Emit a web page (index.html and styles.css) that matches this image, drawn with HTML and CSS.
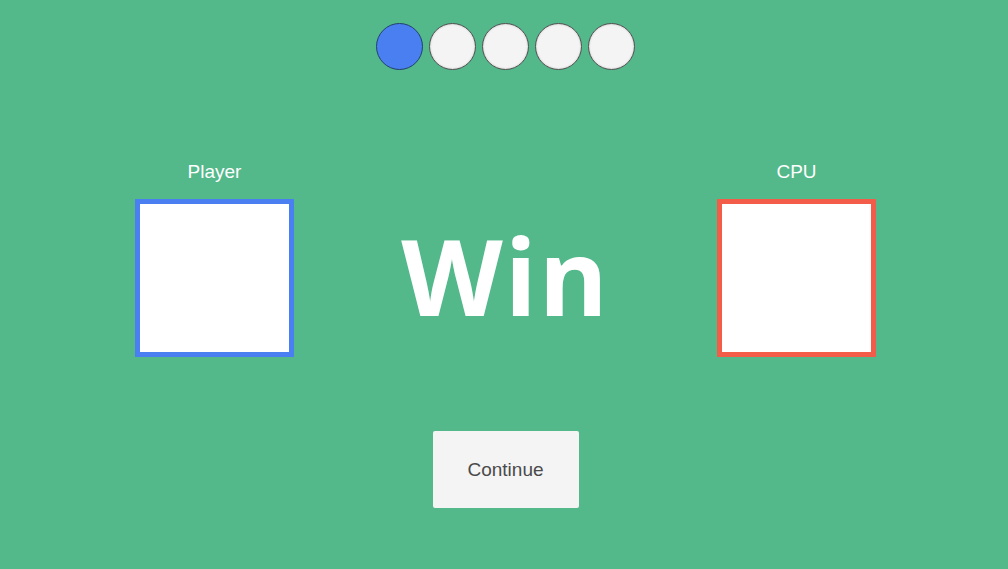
FILE: index.html
```html
<!DOCTYPE html>
<html>
<head>
<meta charset="utf-8">
<link rel="stylesheet" href="styles.css">
</head>
<body>
<div class="page">
  <div class="rounds">
    <span class="dot dot-active"></span>
    <span class="dot"></span>
    <span class="dot"></span>
    <span class="dot"></span>
    <span class="dot"></span>
  </div>
  <div class="arena">
    <div class="label">Player</div>
    <div class="spacer"></div>
    <div class="label">CPU</div>
    <div class="card card-player"></div>
    <div class="result">Win</div>
    <div class="card card-cpu"></div>
  </div>
  <button class="continue">Continue</button>
</div>
</body>
</html>
```

FILE: styles.css
```css
html, body {
  margin: 0;
  padding: 0;
  height: 100%;
}
body {
  background: #53b88a;
  font-family: "Liberation Sans", Arial, sans-serif;
  overflow: hidden;
}
.page {
  display: flex;
  flex-direction: column;
  align-items: center;
  padding-top: 23px;
  padding-left: 3px;
}
.rounds {
  display: flex;
  gap: 6px;
}
.dot {
  width: 45px;
  height: 45px;
  border-radius: 50%;
  border: 1px solid #505050;
  background: #f4f4f4;
  box-sizing: content-box;
  box-shadow: inset 0 0 2px rgba(0, 0, 0, 0.25);
}
.dot-active {
  background: #4a7ff2;
  border-color: #23406f;
  box-shadow: none;
}
.arena {
  margin-top: 91px;
  display: grid;
  grid-template-columns: 159px 423px 159px;
  grid-template-rows: 38px 158px;
}
.label {
  color: #ffffff;
  font-size: 19px;
  text-align: center;
  line-height: 20px;
  padding-top: 1px;
}
.card {
  background: #ffffff;
  border: 5px solid;
  box-sizing: border-box;
  width: 159px;
  height: 158px;
}
.card-player {
  border-color: #4a7ff2;
}
.card-cpu {
  border-color: #f25c49;
}
.result {
  color: #ffffff;
  font-family: "Open Sans", sans-serif;
  font-weight: 700;
  font-size: 105px;
  letter-spacing: 2px;
  line-height: 1;
  text-align: center;
  align-self: center;
  margin-top: -5px;
}
.continue {
  margin-top: 74px;
  width: 146px;
  height: 77px;
  background: #f4f4f4;
  border: none;
  border-radius: 2px;
  color: #4a4a4a;
  font-family: "Liberation Sans", Arial, sans-serif;
  font-size: 19px;
  padding: 0;
}
```
